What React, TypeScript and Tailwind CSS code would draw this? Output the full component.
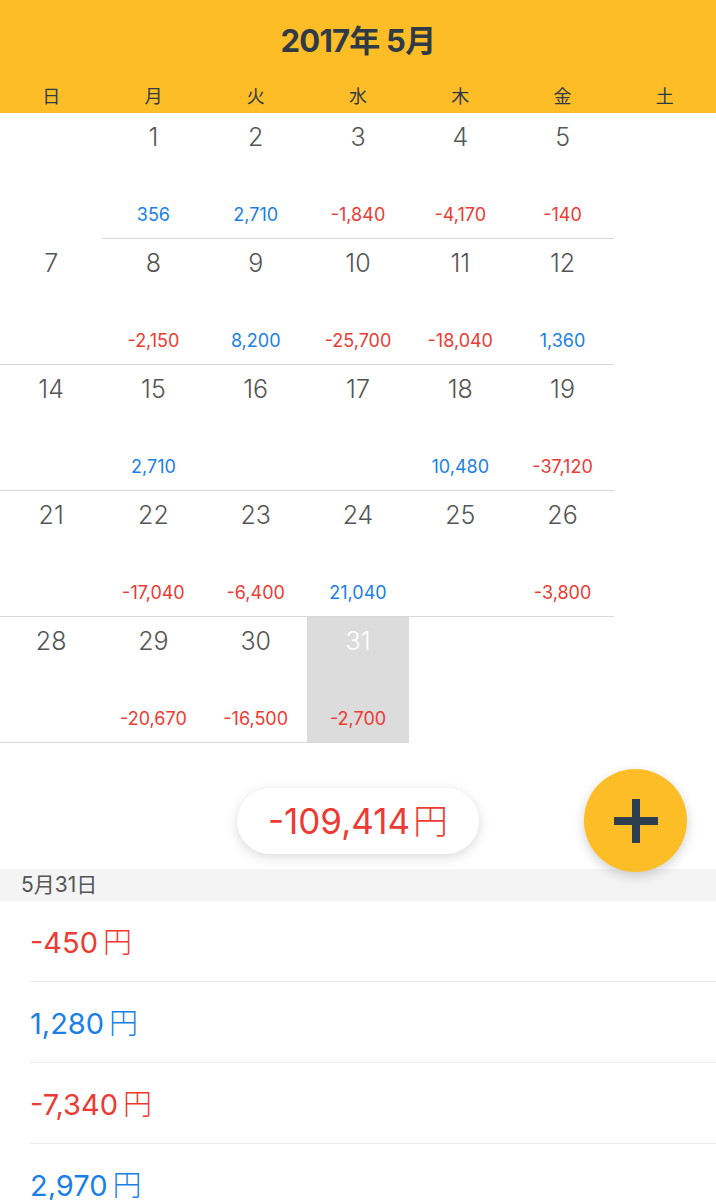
import React from 'react';

type Cell = { day?: number; amount?: number; selected?: boolean };

const weekdays = ['日', '月', '火', '水', '木', '金', '土'];

const weeks: Cell[][] = [
  [{}, { day: 1, amount: 356 }, { day: 2, amount: 2710 }, { day: 3, amount: -1840 }, { day: 4, amount: -4170 }, { day: 5, amount: -140 }, {}],
  [{ day: 7 }, { day: 8, amount: -2150 }, { day: 9, amount: 8200 }, { day: 10, amount: -25700 }, { day: 11, amount: -18040 }, { day: 12, amount: 1360 }, {}],
  [{ day: 14 }, { day: 15, amount: 2710 }, { day: 16 }, { day: 17 }, { day: 18, amount: 10480 }, { day: 19, amount: -37120 }, {}],
  [{ day: 21 }, { day: 22, amount: -17040 }, { day: 23, amount: -6400 }, { day: 24, amount: 21040 }, { day: 25 }, { day: 26, amount: -3800 }, {}],
  [{ day: 28 }, { day: 29, amount: -20670 }, { day: 30, amount: -16500 }, { day: 31, amount: -2700, selected: true }, {}, {}, {}],
];

const entries = [-450, 1280, -7340, 2970];

const fmt = (n: number) => n.toLocaleString('en-US');

export default function App() {
  return (
    <div className="w-[716px] h-[1200px] overflow-hidden bg-white font-['Inter','Noto_Sans_CJK_JP',sans-serif]">
      {/* header */}
      <header className="bg-[#fcbd26] h-[113px] flex flex-col">
        <h1 className="h-[83px] flex items-center justify-center text-[31px] font-bold text-[#2e3a46] tracking-tight">
          2017年 5月
        </h1>
        <div className="grid grid-cols-7 text-[18px] text-[#2e3a46]">
          {weekdays.map(w => (
            <div key={w} className="text-center leading-[28px]">{w}</div>
          ))}
        </div>
      </header>

      {/* calendar */}
      <div className="grid grid-cols-7">
        {weeks.flat().map((c, i) => (
          <div
            key={i}
            className={`h-[126px] flex flex-col items-center ${c.day ? 'border-b border-[#d9d9d9]' : ''} ${c.selected ? 'bg-[#dcdcdc]' : ''}`}
          >
            {c.day && (
              <>
                <span className={`mt-[9px] text-[25px] font-light leading-[30px] ${c.selected ? 'text-white' : 'text-[#555]'}`}>
                  {c.day}
                </span>
                {c.amount !== undefined && (
                  <span className={`mt-[51px] text-[18px] leading-[24px] ${c.amount < 0 ? 'text-[#eb3b33]' : 'text-[#1a7fe6]'}`}>
                    {fmt(c.amount)}
                  </span>
                )}
              </>
            )}
          </div>
        ))}
      </div>

      {/* total + add button */}
      <div className="relative h-[126px] flex justify-center pt-[45px]">
        <div className="h-[66px] w-[242px] rounded-full bg-white shadow-[0_3px_12px_rgba(0,0,0,0.15)] flex items-center justify-center text-[35px] text-[#eb3b33]">
          -109,414<span className="ml-[3px] font-light">円</span>
        </div>
        <button className="absolute right-[29px] top-[26px] z-10 w-[103px] h-[103px] rounded-full bg-[#fcbd26] shadow-[0_4px_12px_rgba(0,0,0,0.18)] flex items-center justify-center">
          <svg width="44" height="44" viewBox="0 0 44 44">
            <rect x="0" y="18" width="44" height="8" fill="#2c3e50" />
            <rect x="18" y="0" width="8" height="44" fill="#2c3e50" />
          </svg>
        </button>
      </div>

      {/* day section */}
      <div className="bg-[#f4f4f4] h-[32px] flex items-center px-[21px] text-[21px] text-[#555]">5月31日</div>
      <ul>
        {entries.map((e, i) => (
          <li key={i} className="ml-[30px] h-[81px] flex items-center pt-[3px] border-b border-[#ececec]">
            <span className={`text-[29px] ${e < 0 ? 'text-[#eb3b33]' : 'text-[#1a7fe6]'}`}>
              {fmt(e)}<span className="ml-[5px] font-light">円</span>
            </span>
          </li>
        ))}
      </ul>
    </div>
  );
}
